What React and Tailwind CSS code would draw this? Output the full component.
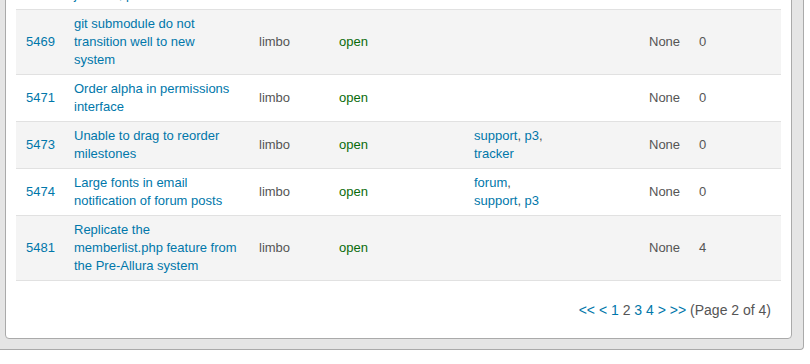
const rows = [
  { id: "", title: "Wiki page history not joinable, pre-Allura", labels: [], votes: "", striped: false, hidden: true },
  { id: "5469", title: "git submodule do not transition well to new system", labels: [], votes: "0", striped: true },
  { id: "5471", title: "Order alpha in permissions interface", labels: [], votes: "0", striped: false },
  { id: "5473", title: "Unable to drag to reorder milestones", labels: ["support", "p3", "tracker"], votes: "0", striped: true },
  { id: "5474", title: "Large fonts in email notification of forum posts", labels: ["forum", "support", "p3"], votes: "0", striped: false },
  { id: "5481", title: "Replicate the memberlist.php feature from the Pre-Allura system", labels: [], votes: "4", striped: true },
];

function Row({ r }) {
  const td = "px-[10px] py-[5px] align-middle border-b border-[#e1e1e1]";
  return (
    <tr className={r.striped ? "bg-[#f4f4f4]" : "bg-white"}>
      <td className={td}>
        <a className="text-[#0077aa]">{r.id}</a>
      </td>
      <td className={td}>
        <a className="text-[#0077aa]">{r.title}</a>
      </td>
      <td className={td + " text-[#555]"}>{r.hidden ? "" : "limbo"}</td>
      <td className={td + " text-[#0a6b0a]"}>{r.hidden ? "" : "open"}</td>
      <td className={td + " text-[#555]"}>
        {r.labels.map((l, i) => (
          <span key={l}>
            <a className="text-[#0077aa]">{l}</a>
            {i < r.labels.length - 1 ? ", " : ""}
          </span>
        ))}
      </td>
      <td className={td}></td>
      <td className={td + " text-[#555]"}>{r.hidden ? "" : "None"}</td>
      <td className={td + " text-[#555]"}>{r.votes}</td>
    </tr>
  );
}

export default function App() {
  return (
    <div className="h-[364px] w-[810px] overflow-hidden bg-white font-['Liberation_Sans',Arial,sans-serif]">
      <div className="-mt-[48px] w-[804px] bg-[#e5e5e5] border-r border-b border-[#aaaaaa] rounded-br-[4px] pl-[5px] pr-[11px] pb-[10px]">
        <div className="bg-white border border-[#aaaaaa] rounded-b-[4px] px-[10px] pt-[10px] pb-[19px]">
          <table className="w-[765px] table-fixed border-collapse text-[13px] leading-[18px]">
            <colgroup>
              <col className="w-[48px]" />
              <col className="w-[185px]" />
              <col className="w-[80px]" />
              <col className="w-[135px]" />
              <col className="w-[95px]" />
              <col className="w-[80px]" />
              <col className="w-[50px]" />
              <col className="w-[92px]" />
            </colgroup>
            <tbody>
              {rows.map((r, i) => (
                <Row key={i} r={r} />
              ))}
            </tbody>
          </table>
          <div className="mt-[20px] pr-[10px] text-right text-[14px] leading-[18px] text-[#555]">
            <a className="text-[#0077aa]">&lt;&lt;</a> <a className="text-[#0077aa]">&lt;</a>{" "}
            <a className="text-[#0077aa]">1</a> <span>2</span> <a className="text-[#0077aa]">3</a>{" "}
            <a className="text-[#0077aa]">4</a> <a className="text-[#0077aa]">&gt;</a>{" "}
            <a className="text-[#0077aa]">&gt;&gt;</a> (Page 2 of 4)
          </div>
        </div>
      </div>
    </div>
  );
}
